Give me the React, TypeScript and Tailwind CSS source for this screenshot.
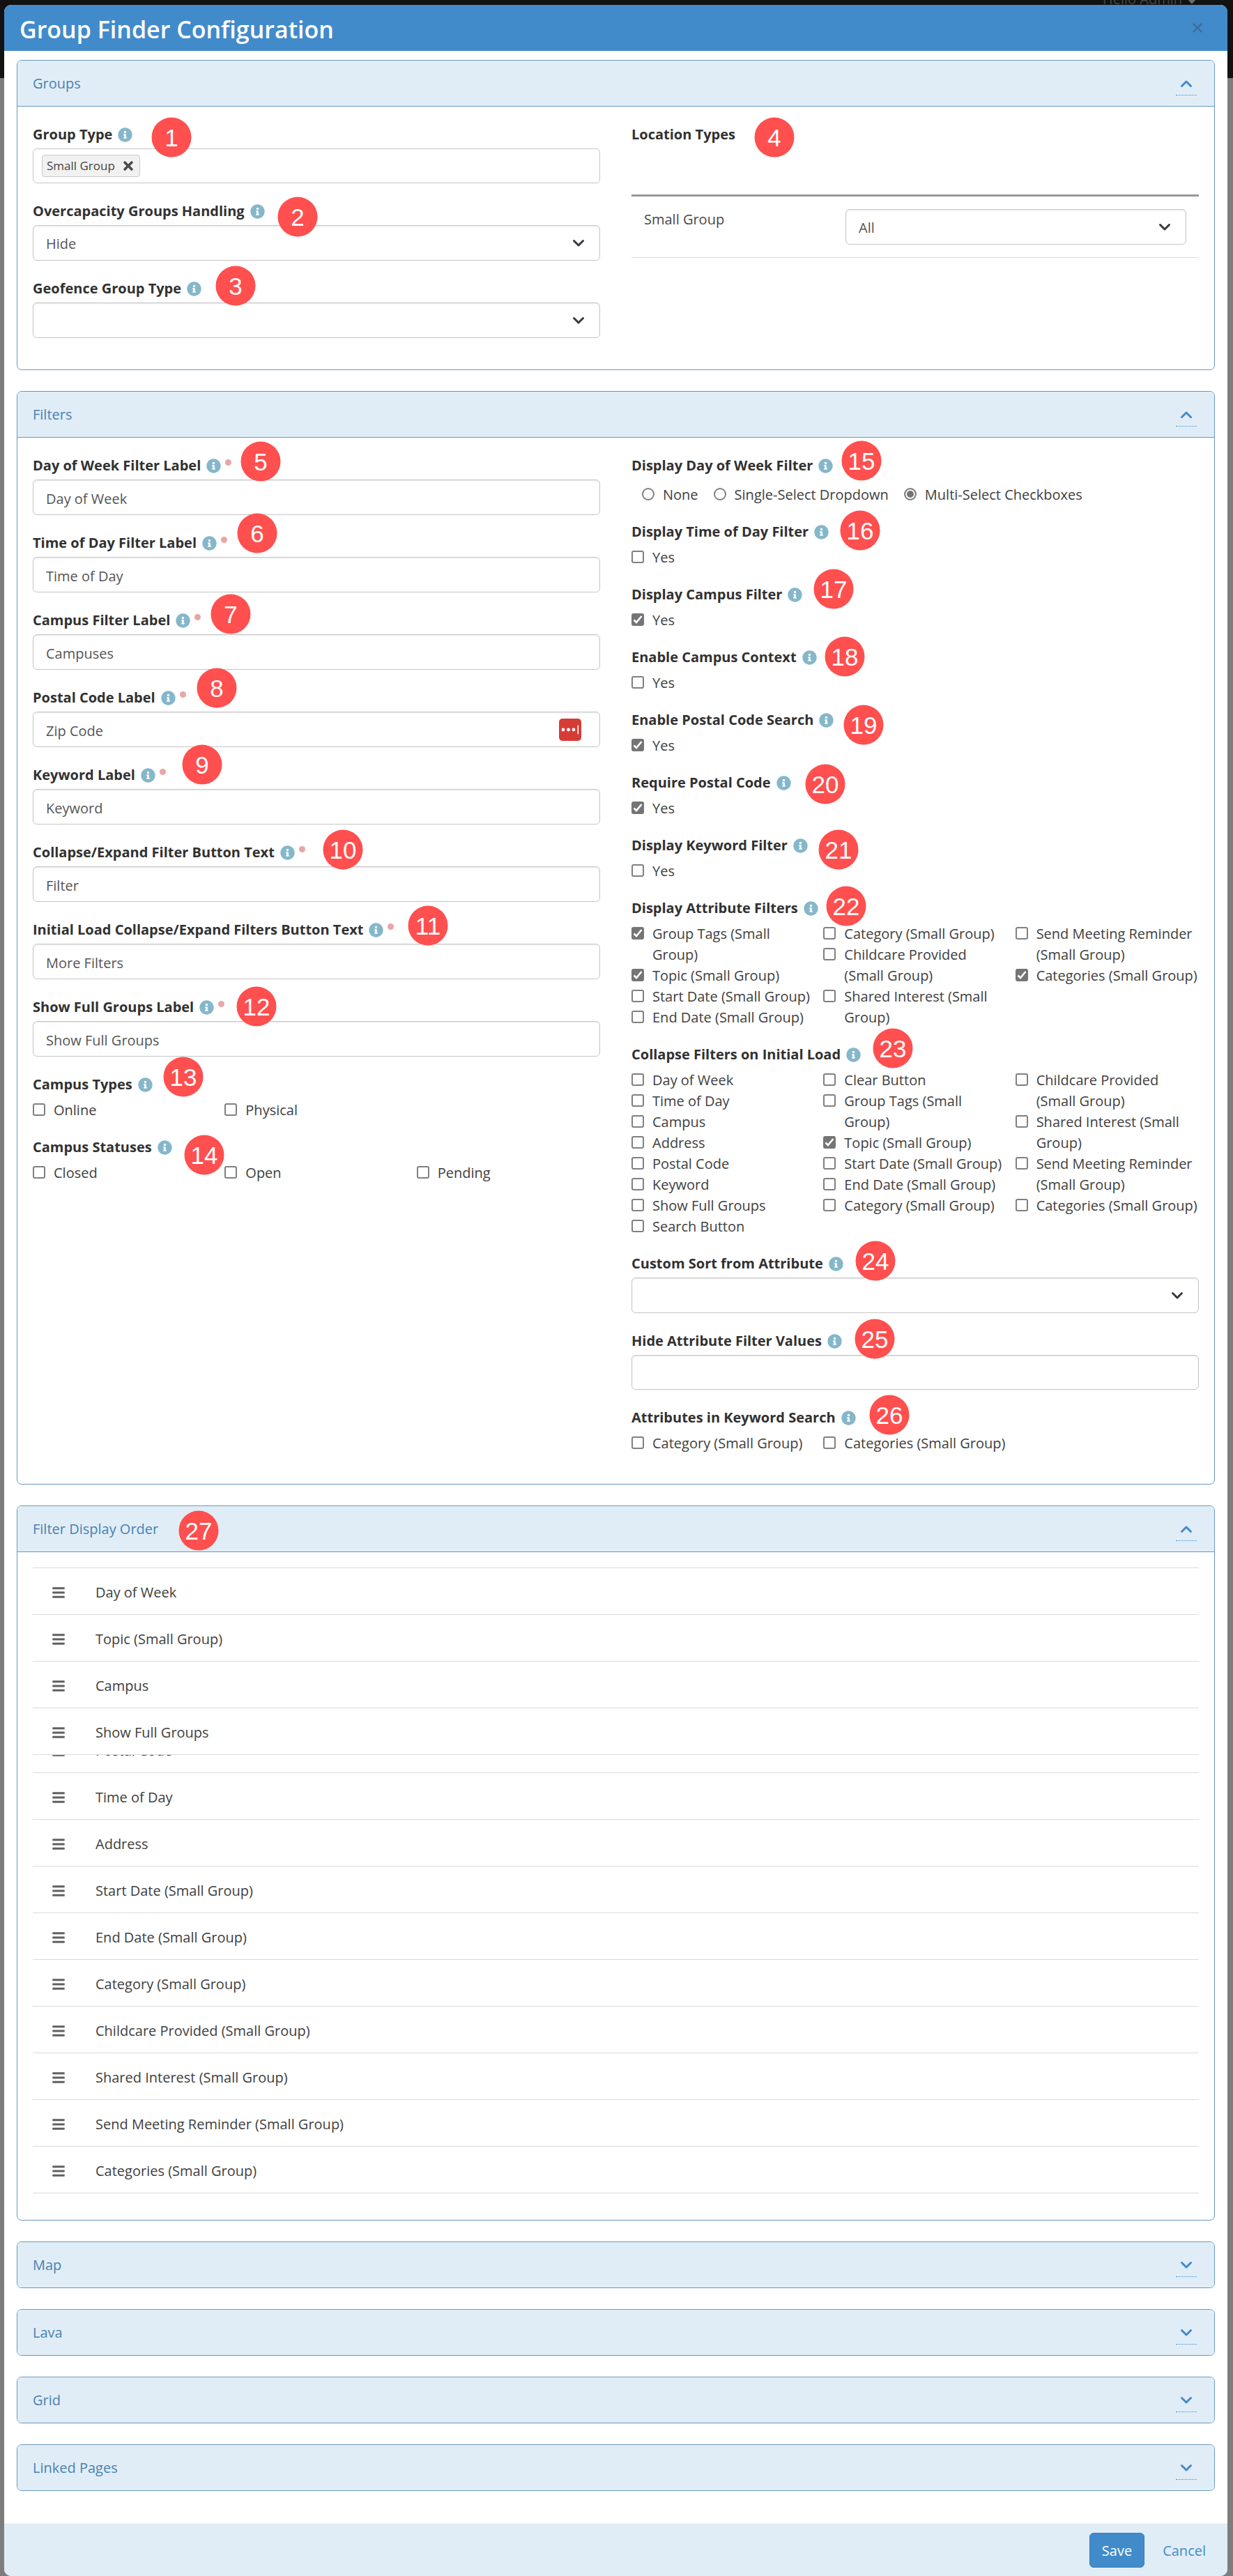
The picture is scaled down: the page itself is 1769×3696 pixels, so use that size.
import { useId } from "react";
import type { ReactNode } from "react";
import { FaBars, FaInfoCircle, FaTimes } from "react-icons/fa";

type Pin = { n: number; x: number; y: number };

/* Numbered callout placed freely over the field it annotates. */
function Marker({ n, x, y }: Pin) {
  return (
    <span
      className="pointer-events-none absolute z-10 flex size-[57px] -translate-x-1/2 -translate-y-1/2 items-center justify-center rounded-full bg-[#ff4f4f] font-['Liberation_Sans',sans-serif] text-[35px] leading-none font-normal text-white"
      style={{ left: x, top: y }}
    >
      {n}
    </span>
  );
}

function Chevron({ up = false, className = "" }: { up?: boolean; className?: string }) {
  return (
    <svg viewBox="0 0 18 12" className={`h-3 w-[18px] ${className}`} fill="none" stroke="currentColor" strokeWidth="3" strokeLinecap="round" strokeLinejoin="round" aria-hidden="true">
      <path d={up ? "M2.5 9.5 9 3l6.5 6.5" : "M2.5 2.5 9 9l6.5-6.5"} />
    </svg>
  );
}

function Caption({ text, id, htmlFor, required, info = true }: { text: string; id?: string; htmlFor?: string; required?: boolean; info?: boolean }) {
  const cls = "text-[20px] leading-[30px] font-bold text-[#313131]";
  return (
    <div className="mb-[5px] flex h-8 items-center pt-[2px]">
      {htmlFor ? (
        <label htmlFor={htmlFor} className={cls}>{text}</label>
      ) : (
        <span id={id} className={cls}>{text}</span>
      )}
      {info && (
        <button type="button" aria-label={`About ${text}`} className="ml-2 text-[#85b7cb]">
          <FaInfoCircle className="size-[21px]" />
        </button>
      )}
      {required && <span className="mt-[6px] ml-[6px] size-[9px] self-start rounded-full bg-[#eaa5a6]" />}
    </div>
  );
}

function Field({ pin, children }: { pin: Pin; children: ReactNode }) {
  return (
    <div className="relative mb-[23px]">
      {children}
      <Marker {...pin} />
    </div>
  );
}

function TextField({ label, value, pin, required = true, vault = false }: { label: string; value: string; pin: Pin; required?: boolean; vault?: boolean }) {
  const id = useId();
  return (
    <Field pin={pin}>
      <Caption text={label} htmlFor={id} required={required} />
      <div className="relative">
        <input
          id={id}
          type="text"
          defaultValue={value}
          className={`block w-full rounded-[6px] border border-[#c6c6c6] bg-white px-[18px] pt-[3px] text-[20px] text-[#555] shadow-[inset_0_1px_2px_rgba(0,0,0,0.1)] ${required ? "h-[51px]" : "h-[50px]"}`}
        />
        {vault && (
          <button type="button" aria-label="Fill from password manager" className="absolute top-[10px] right-[27px]">
            <svg viewBox="0 0 32 32" className="size-8" aria-hidden="true">
              <rect width="32" height="32" rx="5" fill="#d63c36" />
              <circle cx="6" cy="16" r="2.4" fill="#fff" />
              <circle cx="13.5" cy="16" r="2.4" fill="#fff" />
              <circle cx="21" cy="16" r="2.4" fill="#fff" />
              <rect x="26.5" y="9.5" width="1.6" height="13" rx="0.8" fill="#fff" />
            </svg>
          </button>
        )}
      </div>
    </Field>
  );
}

function Select({ id, value, label }: { id?: string; value: string; label?: string }) {
  return (
    <div className="relative">
      <select
        id={id}
        aria-label={label}
        defaultValue={value}
        className="block h-[51px] w-full appearance-none rounded-[6px] border border-[#c6c6c6] bg-white px-[18px] pt-[3px] text-[20px] text-[#555] shadow-[inset_0_1px_2px_rgba(0,0,0,0.1)]"
      >
        <option value={value}>{value}</option>
      </select>
      <Chevron className="pointer-events-none absolute top-5 right-[22px] text-[#343a40]" />
    </div>
  );
}

function SelectField({ label, value, pin }: { label: string; value: string; pin: Pin }) {
  const id = useId();
  return (
    <Field pin={pin}>
      <Caption text={label} htmlFor={id} />
      <Select id={id} value={value} />
    </Field>
  );
}

function Check({ text, checked = false }: { text: string; checked?: boolean }) {
  return (
    <label className="flex items-start gap-3 text-[20px] leading-[30px] whitespace-pre text-[#404040]">
      <span className="mt-[5px] grid size-[18px] shrink-0">
        <input
          type="checkbox"
          defaultChecked={checked}
          className="peer col-start-1 row-start-1 size-[18px] appearance-none rounded-[3px] border-2 border-[#808080] bg-white checked:border-[#757575] checked:bg-[#757575]"
        />
        <svg viewBox="0 0 18 18" className="pointer-events-none col-start-1 row-start-1 hidden size-[18px] peer-checked:block" fill="none" stroke="#fff" strokeWidth="2.6" aria-hidden="true">
          <path d="M3.5 9.5 7 13l7.5-9" />
        </svg>
      </span>
      {text}
    </label>
  );
}

function CheckGroup({ label, pin, columns, checked = [] }: { label: string; pin: Pin; columns: string[][]; checked?: string[] }) {
  const id = useId();
  return (
    <Field pin={pin}>
      <Caption text={label} id={id} />
      <div role="group" aria-labelledby={id} className="-mb-[2px] grid grid-cols-3 gap-x-3 pt-[2px]">
        {columns.map((col, i) => (
          <div key={i} className="min-w-0">
            {col.map((t) => (
              <Check key={t} text={t} checked={checked.includes(t)} />
            ))}
          </div>
        ))}
      </div>
    </Field>
  );
}

function Radios({ pin }: { pin: Pin }) {
  const id = useId();
  const options = ["None", "Single-Select Dropdown", "Multi-Select Checkboxes"];
  return (
    <Field pin={pin}>
      <Caption text="Display Day of Week Filter" id={id} />
      <div role="radiogroup" aria-labelledby={id} className="-mb-[2px] flex h-[37px] items-end gap-[22px] pl-[15px]">
        {options.map((o) => (
          <label key={o} className="flex items-start gap-3 text-[20px] leading-[30px] text-[#404040]">
            <input
              type="radio"
              name={id}
              defaultChecked={o === "Multi-Select Checkboxes"}
              className="mt-[5px] size-[18px] appearance-none rounded-full border-2 border-[#808080] bg-white checked:bg-[#757575] checked:shadow-[inset_0_0_0_2px_#fff]"
            />
            {o}
          </label>
        ))}
      </div>
    </Field>
  );
}

function Panel({ title, pin, children }: { title: string; pin?: Pin; children?: ReactNode }) {
  const open = Boolean(children);
  return (
    <section className="mb-[30px] rounded-[7px] border border-[#6799be]">
      <header
        className={
          open
            ? "relative flex h-[66px] items-center justify-between rounded-t-[6px] border-b border-[#6799be] bg-[#e1edf6] pr-[25px] pl-[22px]"
            : "relative flex h-[65px] items-center justify-between rounded-[6px] bg-[#e1edf6] pr-[25px] pl-[22px]"
        }
      >
        <h2 className="text-[20px] leading-[30px] text-[#4682b4]">{title}</h2>
        <button
          type="button"
          aria-label={`Toggle ${title}`}
          aria-expanded={open}
          className="flex h-[34px] w-[30px] items-center justify-center border-b border-dotted border-[#428bca] pt-[2px] text-[#428bca]"
        >
          <Chevron up={open} />
        </button>
        {pin && <Marker {...pin} />}
      </header>
      {children}
    </section>
  );
}

const orderRow = "flex h-[67px] items-center gap-[43px] border-b border-[#dbdbdb] pt-1 pl-[27px] text-[20px] leading-[30px] text-[#404040]";

function OrderRow({ text }: { text: string }) {
  return (
    <li className={orderRow}>
      <FaBars className="size-5 text-[#606060]" />
      {text}
    </li>
  );
}

const yes = [["Yes"]];

export default function App() {
  const tagsId = useId();
  return (
    <div className="relative bg-[#7d7d7d] pt-[7px] pr-[8px] pl-[6px] font-['Open_Sans',sans-serif]">
      <div className="absolute inset-x-0 top-0 h-28 overflow-hidden bg-[#121212]">
        <p className="-mt-[11px] mr-[53px] flex items-center justify-end gap-2 text-[20px] leading-5 text-[#454545]">
          Hello Admin
          <svg viewBox="0 0 12 7" className="mt-[6px] h-[7px] w-3" fill="#6b6b6b" aria-hidden="true">
            <path d="M0 0h12L6 7z" />
          </svg>
        </p>
      </div>

      <div role="dialog" aria-label="Group Finder Configuration" className="relative rounded-[10px] bg-white">
        <header className="flex h-[66px] items-center justify-between rounded-t-[10px] bg-[#428bca] pr-[34px] pl-[22px]">
          <h1 className="pt-[3px] text-[34px] leading-[46px] font-semibold text-white">Group Finder Configuration</h1>
          <button type="button" aria-label="Close" className="text-[#3a6f9d]">
            <svg viewBox="0 0 18 18" className="size-[18px]" fill="none" stroke="currentColor" strokeWidth="2.6" aria-hidden="true">
              <path d="m3 3 12 12M15 3 3 15" />
            </svg>
          </button>
        </header>

        <main className="px-[18px] pt-[13px] pb-[17px]">
          <Panel title="Groups">
            <div className="grid grid-cols-2 gap-[45px] px-[22px] pt-[23px] pb-[22px]">
              <div>
                <Field pin={{ n: 1, x: 199, y: 21 }}>
                  <Caption text="Group Type" htmlFor={tagsId} />
                  <div className="flex h-[50px] items-center rounded-[6px] border border-[#c6c6c6] bg-white px-3">
                    <span className="flex h-8 shrink-0 items-center gap-[9px] rounded-[4px] border border-[#c9c9c9] bg-[#f1f1f1] px-[6px] text-[17px] text-[#444]">
                      Small Group
                      <button type="button" aria-label="Remove Small Group">
                        <FaTimes className="size-5 text-[#4a4a4a]" />
                      </button>
                    </span>
                    <input id={tagsId} type="text" className="ml-2 min-w-0 flex-1 text-[20px] outline-none" />
                  </div>
                </Field>
                <SelectField label="Overcapacity Groups Handling" value="Hide" pin={{ n: 2, x: 380, y: 25 }} />
                <SelectField label="Geofence Group Type" value="" pin={{ n: 3, x: 291, y: 13 }} />
              </div>
              <Field pin={{ n: 4, x: 205, y: 21 }}>
                <Caption text="Location Types" info={false} />
                <table className="w-full text-left text-[20px] leading-[30px] text-[#484848]">
                  <thead>
                    <tr className="h-[67px] border-b-[3px] border-[#989898]">
                      <th className="w-[289px]" />
                      <th />
                    </tr>
                  </thead>
                  <tbody>
                    <tr className="border-b border-[#dbdbdb]">
                      <td className="p-[18px] align-top">Small Group</td>
                      <td className="p-[18px]">
                        <Select value="All" label="Small Group location type" />
                      </td>
                    </tr>
                  </tbody>
                </table>
              </Field>
            </div>
          </Panel>

          <Panel title="Filters">
            <div className="grid grid-cols-2 gap-[45px] px-[22px] pt-[23px] pb-[22px]">
              <div>
                <TextField label="Day of Week Filter Label" value="Day of Week" pin={{ n: 5, x: 327, y: 11 }} />
                <TextField label="Time of Day Filter Label" value="Time of Day" pin={{ n: 6, x: 322, y: 3 }} />
                <TextField label="Campus Filter Label" value="Campuses" pin={{ n: 7, x: 284, y: 8 }} />
                <TextField label="Postal Code Label" value="Zip Code" pin={{ n: 8, x: 264, y: 3 }} vault />
                <TextField label="Keyword Label" value="Keyword" pin={{ n: 9, x: 243, y: 2 }} />
                <TextField label="Collapse/Expand Filter Button Text" value="Filter" pin={{ n: 10, x: 445, y: 13 }} />
                <TextField label="Initial Load Collapse/Expand Filters Button Text" value="More Filters" pin={{ n: 11, x: 567, y: 11 }} />
                <TextField label="Show Full Groups Label" value="Show Full Groups" pin={{ n: 12, x: 321, y: 16 }} />
                <CheckGroup label="Campus Types" pin={{ n: 13, x: 216, y: 6 }} columns={[["Online"], ["Physical"]]} />
                <CheckGroup label="Campus Statuses" pin={{ n: 14, x: 246, y: 28 }} columns={[["Closed"], ["Open"], ["Pending"]]} />
              </div>
              <div>
                <Radios pin={{ n: 15, x: 330, y: 10 }} />
                <CheckGroup label="Display Time of Day Filter" pin={{ n: 16, x: 328, y: 15 }} columns={yes} />
                <CheckGroup label="Display Campus Filter" pin={{ n: 17, x: 290, y: 9 }} columns={yes} checked={["Yes"]} />
                <CheckGroup label="Enable Campus Context" pin={{ n: 18, x: 306, y: 16 }} columns={yes} />
                <CheckGroup label="Enable Postal Code Search" pin={{ n: 19, x: 333, y: 24 }} columns={yes} checked={["Yes"]} />
                <CheckGroup label="Require Postal Code" pin={{ n: 20, x: 278, y: 19 }} columns={yes} checked={["Yes"]} />
                <CheckGroup label="Display Keyword Filter" pin={{ n: 21, x: 297, y: 23 }} columns={yes} />
                <CheckGroup
                  label="Display Attribute Filters"
                  pin={{ n: 22, x: 308, y: 14 }}
                  columns={[
                    ["Group Tags (Small\nGroup)", "Topic (Small Group)", "Start Date (Small Group)", "End Date (Small Group)"],
                    ["Category (Small Group)", "Childcare Provided\n(Small Group)", "Shared Interest (Small\nGroup)"],
                    ["Send Meeting Reminder\n(Small Group)", "Categories (Small Group)"],
                  ]}
                  checked={["Group Tags (Small\nGroup)", "Topic (Small Group)", "Categories (Small Group)"]}
                />
                <CheckGroup
                  label="Collapse Filters on Initial Load"
                  pin={{ n: 23, x: 375, y: 8 }}
                  columns={[
                    ["Day of Week", "Time of Day", "Campus", "Address", "Postal Code", "Keyword", "Show Full Groups", "Search Button"],
                    ["Clear Button", "Group Tags (Small\nGroup)", "Topic (Small Group)", "Start Date (Small Group)", "End Date (Small Group)", "Category (Small Group)"],
                    ["Childcare Provided\n(Small Group)", "Shared Interest (Small\nGroup)", "Send Meeting Reminder\n(Small Group)", "Categories (Small Group)"],
                  ]}
                  checked={["Topic (Small Group)"]}
                />
                <SelectField label="Custom Sort from Attribute" value="" pin={{ n: 24, x: 350, y: 13 }} />
                <TextField label="Hide Attribute Filter Values" value="" required={false} pin={{ n: 25, x: 349, y: 14 }} />
                <CheckGroup label="Attributes in Keyword Search" pin={{ n: 26, x: 370, y: 13 }} columns={[["Category (Small Group)"], ["Categories (Small Group)"]]} />
              </div>
            </div>
          </Panel>

          <Panel title="Filter Display Order" pin={{ n: 27, x: 260, y: 35 }}>
            <ul className="mx-[22px] mt-[22px] mb-[38px] border-t border-[#dbdbdb]">
              <OrderRow text="Day of Week" />
              <OrderRow text="Topic (Small Group)" />
              <OrderRow text="Campus" />
              <OrderRow text="Show Full Groups" />
              {/* row scrolled mostly out of view */}
              <li className="flex h-[26px] flex-col justify-end overflow-hidden">
                <div className={`${orderRow} shrink-0`}>
                  <FaBars className="size-5 text-[#606060]" />
                  Postal Code
                </div>
              </li>
              <OrderRow text="Time of Day" />
              <OrderRow text="Address" />
              <OrderRow text="Start Date (Small Group)" />
              <OrderRow text="End Date (Small Group)" />
              <OrderRow text="Category (Small Group)" />
              <OrderRow text="Childcare Provided (Small Group)" />
              <OrderRow text="Shared Interest (Small Group)" />
              <OrderRow text="Send Meeting Reminder (Small Group)" />
              <OrderRow text="Categories (Small Group)" />
            </ul>
          </Panel>

          <Panel title="Map" />
          <Panel title="Lava" />
          <Panel title="Grid" />
          <Panel title="Linked Pages" />
        </main>

        <footer className="flex justify-end gap-2 rounded-b-[10px] border-t border-[#dfe5ea] bg-[#e1edf6] px-[13px] py-3 text-[20px]">
          <button type="button" className="h-[50px] rounded-[6px] border border-[#357ebd] bg-[#428bca] px-[17px] pt-[2px] text-white">
            Save
          </button>
          <button type="button" className="h-[50px] rounded-[6px] border border-transparent px-[17px] pt-[2px] text-[#428bca]">
            Cancel
          </button>
        </footer>
      </div>
    </div>
  );
}
